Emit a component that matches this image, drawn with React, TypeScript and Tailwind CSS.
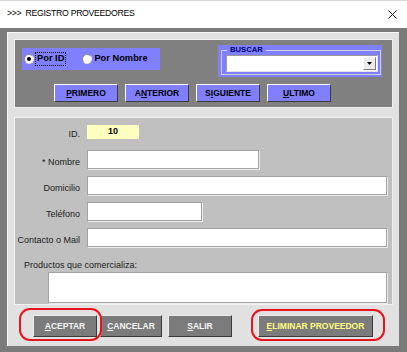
import React from "react";

function Radio({ checked }: { checked?: boolean }) {
  return (
    <span className="w-[10px] h-[10px] rounded-full bg-white border border-t-[#8a8a8a] border-l-[#8a8a8a] border-r-[#e6e6e6] border-b-[#e6e6e6] flex items-center justify-center shrink-0">
      {checked && <span className="w-[4px] h-[4px] rounded-full bg-black" />}
    </span>
  );
}

function NavButton({ pre, u, post }: { pre: string; u: string; post: string }) {
  return (
    <div className="w-[64px] h-[18px] bg-[#8080ff] border border-t-white border-l-white border-r-[#3c3c3c] border-b-[#3c3c3c] flex items-center justify-center text-[8.5px] font-bold text-black leading-none">
      <span>
        {pre}
        <u className="underline-offset-[1px]">{u}</u>
        {post}
      </span>
    </div>
  );
}

function Field({ label, width }: { label: string; width: string }) {
  return (
    <div className="flex items-center gap-[7px]">
      <span className="w-[65px] mt-[6px] text-right text-[9px] leading-none text-[#1c1c1c] whitespace-nowrap">
        {label}
      </span>
      <div className={`${width} h-[19px] bg-white border border-[#a3a3a3] shadow-[1px_1px_0_#ececec]`} />
    </div>
  );
}

function FormButton({
  pre,
  u,
  post,
  width,
  yellow,
}: {
  pre: string;
  u: string;
  post: string;
  width: string;
  yellow?: boolean;
}) {
  return (
    <div
      className={`${width} h-[22px] bg-[#7b7b7b] border border-t-[#ececec] border-l-[#ececec] border-r-[#3a3a3a] border-b-[#3a3a3a] flex items-center justify-center text-[8.5px] font-bold leading-none ${
        yellow ? "text-[#ffff80]" : "text-[#f4f4f4]"
      }`}
    >
      <span>
        {pre}
        <u className="underline-offset-[1px]">{u}</u>
        {post}
      </span>
    </div>
  );
}

export default function App() {
  return (
    <div className="w-[407px] h-[352px] overflow-hidden bg-[#7b7b7b] flex flex-col font-['Liberation_Sans',Arial,sans-serif] text-black">
      {/* title bar */}
      <div className="h-[28px] shrink-0 bg-white border-t border-[#d6d6d6] flex items-center justify-between pl-[7px] pr-[10px] pb-[1px]">
        <span className="text-[8.7px] tracking-[-0.3px] text-black whitespace-pre">{">>>  REGISTRO PROVEEDORES"}</span>
        <svg width="9" height="9" viewBox="0 0 9 9" className="shrink-0">
          <path d="M0.5 0.5 L8.5 8.5 M8.5 0.5 L0.5 8.5" stroke="#111" strokeWidth="1" />
        </svg>
      </div>

      {/* form body */}
      <div className="flex-1 pt-[4px] pl-[7px] pr-[8px] pb-[6px]">
        <div className="h-full bg-[#e1e1e1] border-l border-t border-[#f6f6f6] pt-[6px] pl-[6px] pr-[6px] flex flex-col">
          {/* search frame */}
          <div className="h-[69px] shrink-0 bg-[#808080] border border-[#f2f2f2] flex flex-col">
            <div className="flex items-start justify-between">
              <div className="ml-[7px] mt-[8px] w-[138px] h-[22px] bg-[#8080ff] flex items-center pl-[2px] text-[9.3px] font-bold leading-none">
                <Radio checked />
                <span className="ml-[1px] border border-dotted border-black px-[1px] py-[1px]">Por ID</span>
                <span className="ml-[16px]">
                  <Radio />
                </span>
                <span className="ml-[2px]">Por Nombre</span>
              </div>

              <div className="mt-[5px] mr-[10px] w-[164px] h-[32px] bg-[#8080ff] pt-[5px] pl-[3px] pr-[1px] pb-[2px]">
                <div className="relative h-full border border-[#d2d2dc] pt-[4px] pl-[4px] pr-[2px]">
                  <span className="absolute top-[-6px] left-[5px] px-[3px] bg-[#8080ff] text-[7.7px] font-bold leading-[9px] text-[#00006e]">
                    BUSCAR
                  </span>
                  <div className="h-[17px] bg-white border border-t-[#9a9a9a] border-l-[#9a9a9a] border-r-[#e4e4e4] border-b-[#e4e4e4] flex justify-end items-stretch p-[1px]">
                    <div className="w-[13px] bg-[#ececec] border border-t-white border-l-white border-r-[#7a7a7a] border-b-[#7a7a7a] flex items-center justify-center">
                      <svg width="5" height="3" viewBox="0 0 5 3">
                        <path d="M0 0 H5 L2.5 3 Z" fill="#000" />
                      </svg>
                    </div>
                  </div>
                </div>
              </div>
            </div>

            <div className="mt-[7px] pl-[39px] flex gap-[7px]">
              <NavButton pre="" u="P" post="RIMERO" />
              <NavButton pre="A" u="N" post="TERIOR" />
              <NavButton pre="S" u="I" post="GUIENTE" />
              <NavButton pre="" u="U" post="LTIMO" />
            </div>
          </div>

          {/* data frame */}
          <div className="mt-[9px] h-[188px] shrink-0 bg-[#c0c0c0] border border-[#f2f2f2] pt-[6px] flex flex-col">
            <div className="flex items-center gap-[7px]">
              <span className="w-[65px] mt-[6px] text-right text-[9px] leading-none text-[#1c1c1c]">ID.</span>
              <div className="w-[52px] h-[14px] bg-[#ffffc0] flex justify-center pt-[2px] text-[9px] font-bold leading-none">
                10
              </div>
            </div>
            <div className="mt-[11px] flex flex-col gap-[7px]">
              <Field label="* Nombre" width="w-[172px]" />
              <Field label="Domicilio" width="w-[300px]" />
              <Field label="Teléfono" width="w-[115px]" />
              <Field label="Contacto o Mail" width="w-[300px]" />
            </div>
            <div className="mt-[12px] pl-[9px] text-[9px] leading-[12px] text-[#1c1c1c]">Productos que comercializa:</div>
            <div className="mt-[1px] ml-[33px] w-[339px] h-[31px] bg-white border border-[#a3a3a3] shadow-[1px_1px_0_#ececec]" />
          </div>

          {/* buttons */}
          <div className="mt-[10px] flex items-start">
            <div className="relative ml-[19px]">
              <FormButton pre="" u="A" post="CEPTAR" width="w-[64px]" />
              <span className="absolute top-[-7px] bottom-[-4px] left-[-14px] right-[-5px] border-2 border-[#e8141c] rounded-[11px] pointer-events-none" />
            </div>
            <div className="ml-[3px]">
              <FormButton pre="" u="C" post="ANCELAR" width="w-[62px]" />
            </div>
            <div className="ml-[6px]">
              <FormButton pre="" u="S" post="ALIR" width="w-[64px]" />
            </div>
            <div className="relative ml-[26px]">
              <FormButton pre="" u="E" post="LIMINAR PROVEEDOR" width="w-[115px]" yellow />
              <span className="absolute top-[-6px] bottom-[-4px] left-[-7px] right-[-12px] border-2 border-[#e8141c] rounded-[11px] pointer-events-none" />
            </div>
          </div>
        </div>
      </div>
    </div>
  );
}
